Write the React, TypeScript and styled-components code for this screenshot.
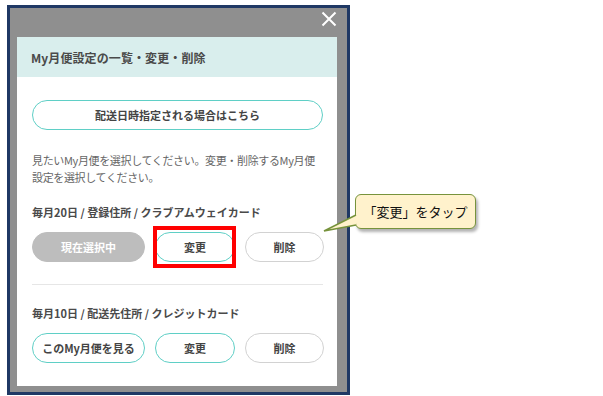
import React from "react";
import styled, { createGlobalStyle } from "styled-components";

const GlobalStyle = createGlobalStyle`
  body {
    margin: 0;
    background: #ffffff;
    font-family: "Noto Sans CJK JP", "Noto Sans", sans-serif;
  }
`;

const Stage = styled.div`
  position: relative;
  width: 603px;
  height: 396px;
  padding: 5px 0 0 7px;
  box-sizing: border-box;
`;

const Frame = styled.div`
  width: 343px;
  height: 390px;
  box-sizing: border-box;
  border: 3px solid #1f3864;
  background: #8f8f8f;
  padding: 29px 10px 6px 7px;
  display: flex;
  flex-direction: column;
  position: relative;
`;

const Close = styled.div`
  position: absolute;
  top: 0;
  right: 10px;
  width: 16px;
  height: 16px;
`;

const Panel = styled.div`
  flex: 1;
  background: #ffffff;
  display: flex;
  flex-direction: column;
`;

const Header = styled.div`
  height: 40px;
  background: #d9eeed;
  display: flex;
  align-items: center;
  padding-left: 14px;
  font-size: 12px;
  font-weight: 700;
  color: #4a4a4a;
  letter-spacing: 0.1px;
`;

const Body = styled.div`
  padding: 23px 14px 0 15px;
  display: flex;
  flex-direction: column;
`;

const PillButton = styled.div<{ $variant?: "teal" | "gray" | "disabled" }>`
  height: 30px;
  box-sizing: border-box;
  border-radius: 15px;
  display: flex;
  align-items: center;
  justify-content: center;
  font-size: 11px;
  font-weight: 700;
  white-space: nowrap;
  color: ${(p) => (p.$variant === "disabled" ? "#ffffff" : "#444444")};
  background: ${(p) => (p.$variant === "disabled" ? "#bdbdbd" : "#ffffff")};
  border: 1.5px solid
    ${(p) =>
      p.$variant === "disabled"
        ? "#bdbdbd"
        : p.$variant === "gray"
        ? "#d2d2d2"
        : "#5fcfc6"};
`;

const Note = styled.p`
  margin: 22px 0 0;
  font-size: 11px;
  line-height: 17px;
  letter-spacing: -0.35px;
  color: #666666;
`;

const Section = styled.div<{ $first?: boolean }>`
  margin-top: ${(p) => (p.$first ? "19px" : "0")};
  padding-top: ${(p) => (p.$first ? "0" : "21px")};
  padding-bottom: 22px;
  border-bottom: ${(p) => (p.$first ? "1.5px solid #e6e6e6" : "none")};
`;

const SectionTitle = styled.div`
  font-size: 11px;
  font-weight: 700;
  line-height: 14px;
  color: #4a4a4a;
`;

const ButtonRow = styled.div`
  margin-top: 13px;
  display: grid;
  grid-template-columns: 113px 80px 79px;
  column-gap: 10px;
  position: relative;
`;

const Highlight = styled.div`
  position: absolute;
  left: 121px;
  top: -6px;
  width: 83px;
  height: 42px;
  box-sizing: border-box;
  border: 4px solid #ff0000;
  pointer-events: none;
`;

const Callout = styled.div`
  position: absolute;
  left: 355px;
  top: 194px;
  width: 121px;
  height: 35px;
  box-sizing: border-box;
  background: #fff2cc;
  border: 1.5px solid #77933c;
  border-radius: 6px;
  box-shadow: 2px 3px 3px rgba(0, 0, 0, 0.3);
  display: flex;
  align-items: center;
  justify-content: center;
  font-family: "Noto Sans CJK JP", sans-serif;
  font-size: 13px;
  color: #111111;
  z-index: 2;
`;

const Tail = styled.svg`
  position: absolute;
  left: 322px;
  top: 205px;
  z-index: 3;
  overflow: visible;
`;

export default function App() {
  return (
    <>
      <GlobalStyle />
      <Stage>
        <Frame>
          <Close>
            <svg width="16" height="16" viewBox="0 0 16 16">
              <path
                d="M1.5 1.5 L14.5 14.5 M14.5 1.5 L1.5 14.5"
                stroke="#ffffff"
                strokeWidth="2"
                fill="none"
              />
            </svg>
          </Close>
          <Panel>
            <Header>My月便設定の一覧・変更・削除</Header>
            <Body>
              <PillButton>配送日時指定される場合はこちら</PillButton>
              <Note>
                見たいMy月便を選択してください。変更・削除するMy月便設定を選択してください。
              </Note>
              <Section $first>
                <SectionTitle>毎月20日 / 登録住所 / クラブアムウェイカード</SectionTitle>
                <ButtonRow>
                  <PillButton $variant="disabled">現在選択中</PillButton>
                  <PillButton>変更</PillButton>
                  <PillButton $variant="gray">削除</PillButton>
                  <Highlight />
                </ButtonRow>
              </Section>
              <Section>
                <SectionTitle>毎月10日 / 配送先住所 / クレジットカード</SectionTitle>
                <ButtonRow>
                  <PillButton>このMy月便を見る</PillButton>
                  <PillButton>変更</PillButton>
                  <PillButton $variant="gray">削除</PillButton>
                </ButtonRow>
              </Section>
            </Body>
          </Panel>
        </Frame>
        <Callout>「変更」をタップ</Callout>
        <Tail width="40" height="30">
          <path
            d="M34 10 L2 26 L34 20"
            fill="#fff2cc"
            stroke="#77933c"
            strokeWidth="1.5"
            strokeLinejoin="miter"
          />
        </Tail>
      </Stage>
    </>
  );
}
